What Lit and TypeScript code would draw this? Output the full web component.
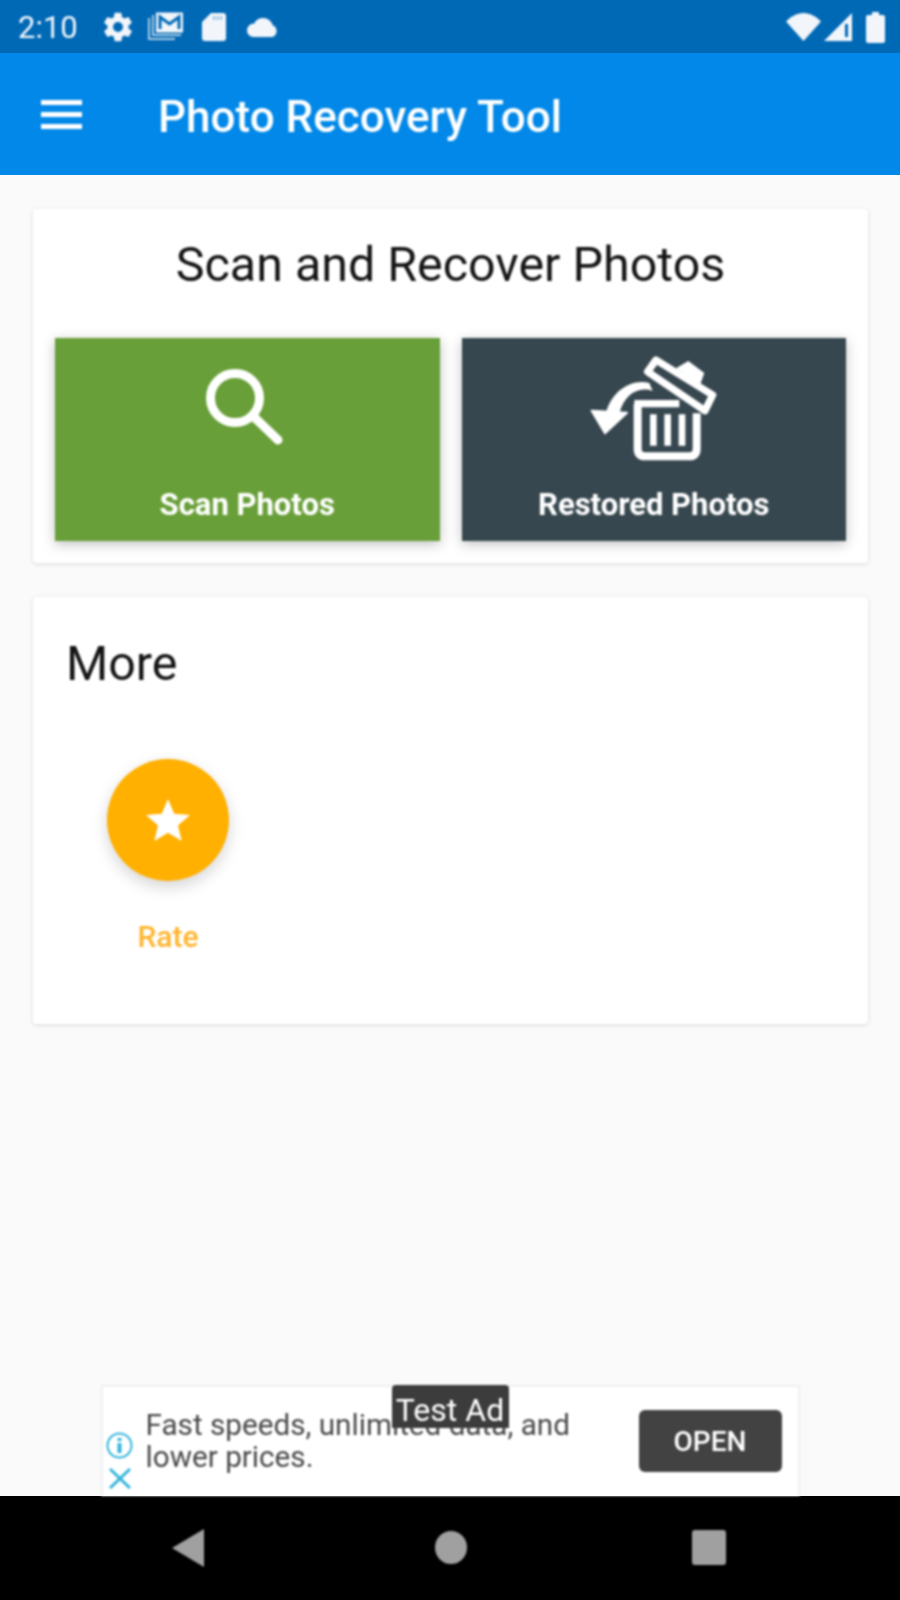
import { LitElement, html, css, svg } from "lit";
import { customElement } from "lit/decorators.js";

@customElement("app-root")
export class AppRoot extends LitElement {
  static styles = css`
    :host { display: block; width: 900px; height: 1600px; overflow: hidden; background: #fafafa; }
    * { box-sizing: border-box; }
    .screen {
      width: 900px; height: 1600px; display: flex; flex-direction: column;
      background: #fafafa; font-family: Roboto, "Liberation Sans", sans-serif;
    }
    .soft, .status > *, .appbar > *, .nav svg { filter: blur(0.8px); }
    .status {
      height: 53px; flex: none; background: #0069b6; color: #f2f6fa;
      display: flex; align-items: center; padding: 1px 15px 0 18px;
    }
    .time { font-size: 31px; width: 83px; line-height: 53px; }
    .status svg { display: block; flex: none; }
    .sicons { display: flex; align-items: center; }
    .spacer { flex: 1; }
    .appbar {
      height: 122px; flex: none; background: #0288e8; color: #fff;
      display: flex; align-items: center; padding-left: 41px;
    }
    .burger { width: 41px; height: 29px; display: flex; flex-direction: column; justify-content: space-between; }
    .burger i { display: block; height: 5px; background: #fff; }
    .apptitle { margin-left: 76px; padding-top: 5px; font-size: 44px; font-weight: 500; }
    .main { flex: 1; padding: 34px 32px 0 33px; display: flex; flex-direction: column; gap: 34px; min-height: 0; }
    .card { background: #fff; border-radius: 4px; box-shadow: 0 1px 4px rgba(0,0,0,.14); }
    .scan { height: 354px; padding: 0 22px; display: flex; flex-direction: column; }
    .scan h2 {
      margin: 0; height: 129px; display: flex; align-items: center; justify-content: center;
      font-size: 48.4px; font-weight: 400; color: #141414; padding-bottom: 18px;
    }
    .btns { display: flex; gap: 22px; }
    .btn {
      flex: 1; height: 203px; display: flex; flex-direction: column; align-items: center;
      color: #fff; font-size: 31px; font-weight: 700; box-shadow: 0 3px 12px rgba(0,0,0,.25);
    }
    .btn svg { display: block; flex: none; }
    .btn span { line-height: 34px; }
    .green { background: #689f38; }
    .dark { background: #37474f; }
    .search { margin: 29px 0 43px -6px; }
    .restore { margin: 7px 0 18px 4px; }
    .more { height: 427px; padding: 39px 33px; }
    .more h2 { margin: 0; font-size: 48.4px; font-weight: 400; color: #141414; line-height: 56px; }
    .rate { width: 122px; margin: 67px 0 0 41px; display: flex; flex-direction: column; align-items: center; }
    .circle {
      width: 122px; height: 122px; border-radius: 50%; background: #ffb000;
      box-shadow: 0 6px 16px rgba(0,0,0,.17); display: flex; align-items: center; justify-content: center;
    }
    .rate span { margin-top: 40px; font-size: 30px; font-weight: 500; color: #ffb52e; line-height: 32px; }
    .ad {
      position: relative; width: 699px; height: 111px; margin: 0 auto; flex: none; background: #fff;
      border: 2px solid #f0f0f0; border-bottom: 0; display: flex; align-items: flex-start;
    }
    .adicons { width: 35px; flex: none; padding: 45px 0 0 3px; display: flex; flex-direction: column; gap: 9px; }
    .adicons svg { display: block; }
    .adtext { width: 450px; margin: 22px 0 0 8px; font-size: 29.7px; line-height: 32px; color: #4a4a4a; }
    .open {
      position: absolute; left: 536px; top: 23px; width: 143px; height: 62px; border-radius: 6px;
      background: #424242; color: #fff; font-size: 28px; font-weight: 500;
      display: flex; align-items: center; justify-content: center;
    }
    .badge {
      position: absolute; left: 289px; top: -2px; width: 117px; height: 43px; border-radius: 4px 4px 0 0;
      background: #3c3c3c; color: #fff; font-size: 32px; line-height: 50px; text-align: center; white-space: nowrap;
    }
    .nav { height: 104px; flex: none; background: #000; display: flex; align-items: center; padding-bottom: 1px; }
    .nav svg { display: block; }
  `;

  private gear() {
    return svg`<path fill="#f2f6fa" fill-rule="evenodd" d="M19.4 13c.04-.33.06-.66.06-1s-.02-.67-.07-1l2.1-1.65a.5.5 0 0 0 .12-.64l-2-3.46a.5.5 0 0 0-.6-.22l-2.49 1a7.3 7.3 0 0 0-1.69-.98l-.38-2.65A.49.49 0 0 0 14 2h-4a.49.49 0 0 0-.49.42l-.38 2.65c-.61.25-1.17.59-1.69.98l-2.49-1a.5.5 0 0 0-.6.22l-2 3.46a.49.49 0 0 0 .12.64L4.57 11a7.9 7.9 0 0 0 0 2l-2.1 1.65a.5.5 0 0 0-.12.64l2 3.46c.12.22.39.3.6.22l2.49-1c.52.4 1.08.73 1.69.98l.38 2.65c.05.24.26.42.49.42h4c.25 0 .46-.18.49-.42l.38-2.65c.61-.25 1.17-.59 1.69-.98l2.49 1c.23.09.49 0 .6-.22l2-3.46a.5.5 0 0 0-.12-.64L19.4 13zM12 15.5a3.5 3.5 0 1 1 0-7 3.5 3.5 0 0 1 0 7z"/>`;
  }

  render() {
    return html`<div class="screen">
      <div class="status">
        <span class="time">2:10</span>
        <div class="sicons">
          <svg width="34" height="34" viewBox="0 0 24 24">${this.gear()}</svg>
          <svg width="38" height="32" viewBox="0 0 38 32" style="margin-left:12px" fill="none" stroke="#f2f6fa">
            <path d="M2 7v21h26" stroke-width="2" opacity=".7"/><path d="M6 4v20h28" stroke-width="2" opacity=".7"/>
            <rect x="9" y="1.500" width="27" height="20" fill="#f2f6fa" stroke="none"/>
            <path d="M13 18V6l9.500 7 9.500-7v12" stroke="#0069b6" stroke-width="3"/>
          </svg>
          <svg width="24" height="28" viewBox="0 0 24 28" style="margin-left:17px"><path fill="#f2f6fa" d="M9 0h12a3 3 0 0 1 3 3v22a3 3 0 0 1-3 3H3a3 3 0 0 1-3-3V9z"/><path d="M12 3v4M15.500 3v4M19 3v4" stroke="#0069b6" stroke-width="1.500" opacity=".5"/></svg>
          <svg width="32" height="19" viewBox="0 0 32 19" style="margin-left:21px"><path fill="#f2f6fa" d="M25.800 7.200A10 10 0 0 0 16 0a10 10 0 0 0-8.900 5.500A7 7 0 0 0 0 12.500 6.500 6.500 0 0 0 6.500 19h19a6.400 6.400 0 0 0 .3-11.800z"/></svg>
        </div>
        <div class="spacer"></div>
        <svg width="35" height="28" viewBox="0 0 35 28"><path fill="#f2f6fa" d="M17.500 28 0 8.500C5 3.500 11 0 17.500 0S30 3.500 35 8.500z"/></svg>
        <svg width="28" height="28" viewBox="0 0 28 28" style="margin-left:3px"><path fill="#f2f6fa" d="M0 28 28 0v28z"/><path d="M22.500 11v13" stroke="#0069b6" stroke-width="3"/></svg>
        <svg width="19" height="31" viewBox="0 0 19 31" style="margin-left:14px"><path fill="#f2f6fa" d="M6 0h7v3h4a2 2 0 0 1 2 2v24a2 2 0 0 1-2 2H2a2 2 0 0 1-2-2V5a2 2 0 0 1 2-2h4z"/></svg>
      </div>
      <div class="appbar">
        <div class="burger"><i></i><i></i><i></i></div>
        <div class="apptitle">Photo Recovery Tool</div>
      </div>
      <div class="main soft">
        <section class="card scan">
          <h2>Scan and Recover Photos</h2>
          <div class="btns">
            <div class="btn green">
              <svg class="search" width="78" height="78" viewBox="0 0 78 78" fill="none" stroke="#fff"><circle cx="30" cy="31" r="24.500" stroke-width="9"/><path d="M48 49l25 24" stroke-width="9" stroke-linecap="round"/></svg>
              <span>Scan Photos</span>
            </div>
            <div class="btn dark">
              <svg class="restore" width="150" height="125" viewBox="0 0 450 375" fill="none" stroke="#fff">
                <path d="M170 176V312c0 15 8 22 22 22H325c14 0 22-7 22-22V205" stroke-width="24"/>
                <path d="M160 176H295" stroke-width="22"/>
                <path d="M217 208V302M260 208V302M303 208V302" stroke-width="20"/>
                <path d="M225 45 395 150 372 197 200 80Z" stroke-width="22" stroke-linejoin="round"/>
                <path d="M285 70 322 48 370 84 358 118Z" fill="#fff" stroke="none"/>
                <path d="M215 138C170 122 130 150 115 205L75 205C90 140 150 100 205 114Z" fill="#fff" stroke="none"/>
                <path d="M32 197 138 203 72 265Z" fill="#fff" stroke="#fff" stroke-width="6" stroke-linejoin="round"/>
              </svg>
              <span>Restored Photos</span>
            </div>
          </div>
        </section>
        <section class="card more">
          <h2>More</h2>
          <div class="rate">
            <div class="circle"><svg width="44" height="42" viewBox="0 0 44 42"><path fill="#fff" d="M22 0l6.200 14.800L44 16.100 32 26.500 35.700 42 22 33.700 8.300 42 12 26.500 0 16.100l15.800-1.300z"/></svg></div>
            <span>Rate</span>
          </div>
        </section>
      </div>
      <div class="ad soft">
        <div class="adicons">
          <svg width="27" height="27" viewBox="0 0 27 27" fill="none" stroke="#35b5dc"><circle cx="13.500" cy="13.500" r="12" stroke-width="2"/><path d="M13.500 11v10" stroke-width="4"/><path d="M13.500 6v3" stroke-width="4"/></svg>
          <svg width="22" height="21" viewBox="0 0 22 21" style="margin-left:3px" fill="none" stroke="#35b5dc" stroke-width="3"><path d="M1 1l20 19M21 1 1 20"/></svg>
        </div>
        <div class="adtext">Fast speeds, unlimited data, and lower prices.</div>
        <div class="open">OPEN</div>
        <div class="badge">Test Ad</div>
      </div>
      <div class="nav">
        <svg width="32" height="38" viewBox="0 0 32 38" style="margin-left:172px"><path fill="#a0a0a0" d="M32 0v38L0 19z"/></svg>
        <svg width="32" height="33" viewBox="0 0 32 33" style="margin-left:231px"><ellipse cx="16" cy="16.500" rx="16" ry="16.500" fill="#a0a0a0"/></svg>
        <svg width="34" height="35" viewBox="0 0 34 35" style="margin-left:225px"><rect width="34" height="35" rx="3" fill="#a0a0a0"/></svg>
      </div>
    </div>`;
  }
}
